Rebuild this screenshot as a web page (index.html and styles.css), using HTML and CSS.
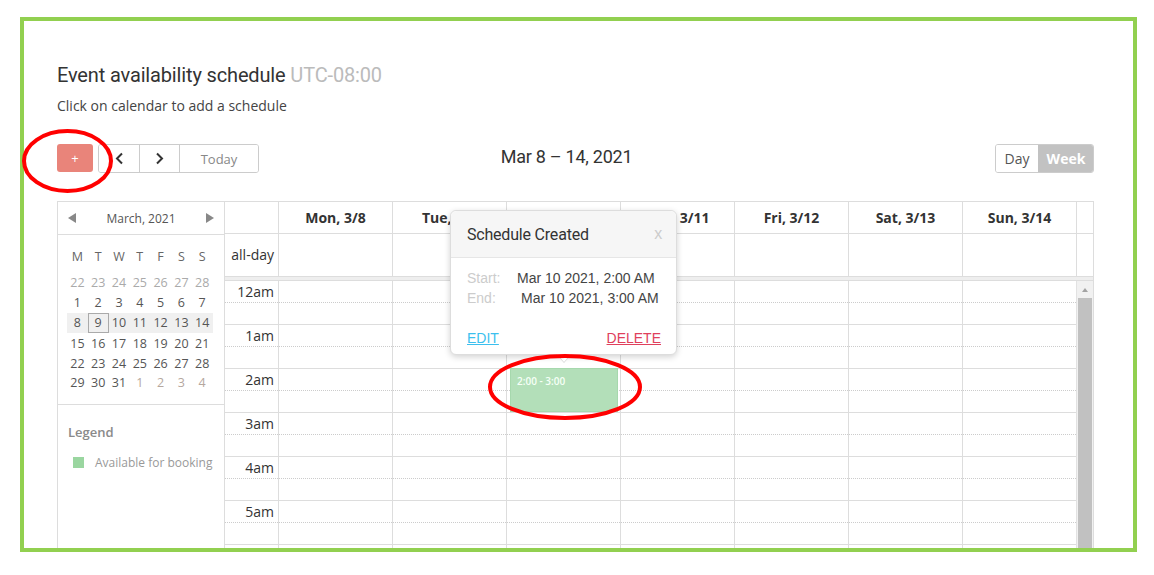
FILE: index.html
```html
<!DOCTYPE html>
<html lang="en">
<head>
  <meta charset="UTF-8" />
  <title>Event availability schedule</title>
  <link rel="stylesheet" href="styles.css">
</head>
<body>

  <div class="frame">
    <h2 class="title">Event availability schedule <span class="tz">UTC-08:00</span></h2>
    <p class="hint">Click on calendar to add a schedule</p>

    <div class="toolbar">
      <div class="tb-left">
        <button class="btn-add">+</button>
        <div class="btn-group">
          <button class="btn btn-nav">
            <svg width="9" height="13" viewBox="0 0 9 13"><path d="M7 1.5 2 6.5l5 5" fill="none" stroke="#333" stroke-width="2"/></svg>
          </button>
          <button class="btn btn-nav">
            <svg width="9" height="13" viewBox="0 0 9 13"><path d="M2 1.5l5 5-5 5" fill="none" stroke="#333" stroke-width="2"/></svg>
          </button>
          <button class="btn btn-today">Today</button>
        </div>
      </div>
      <h3 class="range">Mar 8 – 14, 2021</h3>
      <div class="tb-right">
        <div class="btn-group">
          <button class="btn btn-day">Day</button>
          <button class="btn btn-week active">Week</button>
        </div>
      </div>
    </div>

    <div class="cal">
      <aside class="side">
        <div class="mini-head">
          <svg width="8" height="10" viewBox="0 0 8 10"><path d="M8 0v10L0 5z" fill="#888"/></svg>
          <span>March, 2021</span>
          <svg width="8" height="10" viewBox="0 0 8 10"><path d="M0 0v10l8-5z" fill="#888"/></svg>
        </div>
        <table class="mini-grid">
          <tr class="dow"><th>M</th><th>T</th><th>W</th><th>T</th><th>F</th><th>S</th><th>S</th></tr>
          <tr><td class="prev">22</td><td class="prev">23</td><td class="prev">24</td><td class="prev">25</td><td class="prev">26</td><td class="prev">27</td><td class="prev">28</td></tr>
          <tr><td>1</td><td>2</td><td>3</td><td>4</td><td>5</td><td>6</td><td>7</td></tr>
          <tr class="cur-week"><td>8</td><td class="today">9</td><td>10</td><td>11</td><td>12</td><td>13</td><td>14</td></tr>
          <tr><td>15</td><td>16</td><td>17</td><td>18</td><td>19</td><td>20</td><td>21</td></tr>
          <tr><td>22</td><td>23</td><td>24</td><td>25</td><td>26</td><td>27</td><td>28</td></tr>
          <tr><td>29</td><td>30</td><td>31</td><td class="next">1</td><td class="next">2</td><td class="next">3</td><td class="next">4</td></tr>
        </table>
        <div class="legend">
          <h4>Legend</h4>
          <div class="legend-item"><span class="swatch"></span>Available for booking</div>
        </div>
      </aside>

      <div class="week">
        <div class="week-head">
          <div></div>
          <div>Mon, 3/8</div>
          <div>Tue, 3/9</div>
          <div>Wed, 3/10</div>
          <div>Thu, 3/11</div>
          <div>Fri, 3/12</div>
          <div>Sat, 3/13</div>
          <div>Sun, 3/14</div>
          <div></div>
        </div>
        <div class="allday">
          <div class="allday-label">all-day</div>
          <div></div><div></div><div></div><div></div><div></div><div></div><div></div>
          <div></div>
        </div>
        <div class="sep"></div>

        <div class="tg">
          <div class="tg-lines">
            <div class="hour"><div class="half"><span class="t">12am</span></div><div class="half"></div></div>
            <div class="hour"><div class="half"><span class="t">1am</span></div><div class="half"></div></div>
            <div class="hour"><div class="half"><span class="t">2am</span></div><div class="half"></div></div>
            <div class="hour"><div class="half"><span class="t">3am</span></div><div class="half"></div></div>
            <div class="hour"><div class="half"><span class="t">4am</span></div><div class="half"></div></div>
            <div class="hour"><div class="half"><span class="t">5am</span></div><div class="half"></div></div>
            <div class="hour"><div class="half"></div><div class="half"></div></div>
          </div>
          <div class="day-col c1"></div>
          <div class="day-col c2"></div>
          <div class="day-col c3">
            <div class="event">2:00 - 3:00</div>
          </div>
          <div class="day-col c4"></div>
          <div class="day-col c5"></div>
          <div class="day-col c6"></div>
          <div class="day-col c7"></div>
          <div class="vscroll">
            <div class="vscroll-up"></div>
            <div class="vscroll-thumb"></div>
          </div>
        </div>
      </div>

      <div class="popup">
        <div class="popup-head">
          <span>Schedule Created</span>
          <span class="popup-close">x</span>
        </div>
        <div class="popup-body">
          <div class="popup-row"><span class="lbl">Start:</span><span>Mar 10 2021, 2:00 AM</span></div>
          <div class="popup-row"><span class="lbl">End:</span><span class="end-val">Mar 10 2021, 3:00 AM</span></div>
          <div class="popup-actions">
            <a href="#" class="edit">EDIT</a>
            <a href="#" class="delete">DELETE</a>
          </div>
        </div>
      </div>
    </div>
  </div>

  <svg class="marks" width="1154" height="575" viewBox="0 0 1154 575">
    <ellipse cx="67.5" cy="161" rx="43.5" ry="30" fill="none" stroke="#f00" stroke-width="4"/>
    <ellipse cx="565" cy="387" rx="75" ry="31" fill="none" stroke="#f00" stroke-width="4"/>
  </svg>

</body>
</html>
```

FILE: styles.css
```css
* {
  box-sizing: border-box;
}
body {
  margin: 0;
  background: #fff;
  font-family: "Open Sans", sans-serif;
  color: #333;
}
.frame {
  width: 1117px;
  height: 535px;
  margin: 17px 0 0 20px;
  border: 4px solid #92d050;
  padding: 42px 39px 0 33px;
  overflow: hidden;
}
.title {
  margin: 0;
  font: 400 20px/24px Roboto, sans-serif;
  letter-spacing: -0.15px;
  color: #333;
}
.title .tz {
  color: #bbb;
}
.hint {
  margin: 9px 0 0;
  font-size: 14px;
  line-height: 20px;
  color: #444;
}

/* toolbar */
.toolbar {
  display: grid;
  grid-template-columns: 1fr auto 1fr;
  align-items: start;
  margin-top: 28px;
  height: 29px;
}
.tb-left {
  display: flex;
  gap: 5px;
}
.tb-right {
  display: flex;
  justify-content: flex-end;
}
.range {
  margin: 1px 18px 0 0;
  font: 400 18px/24px Roboto, sans-serif;
  letter-spacing: -0.25px;
  color: #333;
}
button {
  font-family: inherit;
  cursor: pointer;
}
.btn-add {
  width: 36px;
  height: 28px;
  padding: 0;
  border: none;
  border-radius: 3px;
  background: #e9847a;
  color: #fff;
  font-size: 13px;
}
.btn-group {
  display: flex;
  height: 29px;
  border: 1px solid #ccc;
  border-radius: 3px;
  overflow: hidden;
}
.btn {
  display: flex;
  align-items: center;
  justify-content: center;
  height: 27px;
  padding: 0;
  border: none;
  border-left: 1px solid #ccc;
  background: #fff;
  color: #888;
  font-size: 13px;
}
.btn:first-child {
  border-left: none;
}
.btn-nav {
  width: 40px;
}
.btn-today {
  width: 79px;
}
.btn-day {
  width: 42px;
  color: #555;
  font-size: 14px;
}
.btn-week {
  width: 55px;
  font-size: 14px;
}
.btn.active {
  background: #c2c2c2;
  border-left-color: #c2c2c2;
  color: #fff;
  font-weight: bold;
}

/* calendar */
.cal {
  position: relative;
  display: flex;
  margin-top: 28px;
  height: 420px;
}
.side {
  width: 167px;
  border-left: 1px solid #ddd;
  border-top: 1px solid #ddd;
}
.mini-head {
  display: flex;
  align-items: center;
  justify-content: space-between;
  height: 33px;
  padding: 0 10px;
  border-bottom: 1px solid #ddd;
  font-size: 12px;
  color: #555;
}
.mini-grid {
  width: 145.6px;
  margin: 11px 0 0 9px;
  border-collapse: collapse;
  table-layout: fixed;
  font-size: 12.5px;
  color: #555;
}
.mini-grid th,
.mini-grid td {
  width: 20.8px;
  height: 20.4px;
  padding: 0;
  text-align: center;
  font-weight: normal;
}
.mini-grid .dow th {
  height: 26px;
  padding-bottom: 6px;
  color: #666;
}
.mini-grid .prev {
  color: #aaa;
}
.mini-grid .next {
  color: #b5a79e;
}
.mini-grid .cur-week td {
  background: #f0f0f0;
}
.mini-grid .today {
  outline: 1px solid #aaa;
  outline-offset: -1px;
}
.mini-grid tr:last-child td {
  border-bottom: 13px solid #fff;
}
.mini-grid + .legend {
  border-top: 1px solid #ddd;
}
.legend {
  padding: 18px 10px;
}
.legend h4 {
  margin: 0;
  font-size: 13px;
  font-weight: 600;
  line-height: 18px;
  color: #8a8a8a;
}
.legend-item {
  display: flex;
  align-items: center;
  gap: 11px;
  margin: 13px 0 0 5px;
  font-size: 12px;
  line-height: 18px;
  color: #999;
}
.swatch {
  width: 11px;
  height: 11px;
  background: #9ad6a0;
}

/* week view */
.week {
  width: 870px;
  border: 1px solid #ddd;
  border-bottom: none;
}
.week-head,
.allday,
.tg {
  display: grid;
  grid-template-columns: 53px repeat(7, 114px) 17px;
}
.week-head {
  height: 32px;
  border-bottom: 1px solid #ddd;
}
.week-head > div {
  display: flex;
  align-items: center;
  justify-content: center;
  font-size: 14px;
  font-weight: bold;
  color: #333;
}
.week-head > div + div,
.allday > div + div {
  border-left: 1px solid #ddd;
}
.allday {
  height: 42px;
}
.allday-label {
  display: flex;
  align-items: center;
  justify-content: flex-end;
  padding: 0 4px 2px 0;
  font-size: 14px;
  color: #333;
}
.sep {
  height: 5px;
  background: #eee;
  border-top: 1px solid #ddd;
  border-bottom: 1px solid #ddd;
}
.tg-lines {
  grid-column: 1 / 9;
  grid-row: 1;
}
.hour .half {
  height: 22px;
  border-bottom: 1px dotted #ccc;
}
.hour .half + .half {
  border-bottom: 1px solid #ddd;
}
.t {
  display: block;
  width: 53px;
  padding-right: 4px;
  text-align: right;
  font-size: 14px;
  line-height: 22px;
  color: #333;
}
.day-col {
  grid-row: 1;
  border-left: 1px solid #ddd;
}
.c1 { grid-column: 2; }
.c2 { grid-column: 3; }
.c3 { grid-column: 4; }
.c4 { grid-column: 5; }
.c5 { grid-column: 6; }
.c6 { grid-column: 7; }
.c7 { grid-column: 8; }
.event {
  height: 44px;
  width: 108px;
  margin: 87px 0 0 3px;
  padding: 5px 6px;
  background: #b3dfb9;
  border: 1px solid #a6d8ad;
  color: #f6fff7;
  font-size: 10px;
  font-weight: 600;
  line-height: 14px;
}
.vscroll {
  grid-column: 9;
  grid-row: 1;
  padding: 0 1px;
  border-left: 1px solid #e2e2e2;
  background: #f1f1f1;
}
.vscroll-up {
  position: relative;
  height: 17px;
}
.vscroll-up::after {
  content: "";
  position: absolute;
  left: 4px;
  top: 7px;
  border: 3.5px solid transparent;
  border-top: none;
  border-bottom: 4px solid #a3a3a3;
}
.vscroll-thumb {
  height: 400px;
  background: #c1c1c1;
}

/* popup */
.popup {
  position: absolute;
  left: 393px;
  top: 9px;
  width: 227px;
  background: #fff;
  border: 1px solid #ddd;
  border-radius: 6px;
  box-shadow: 0 2px 6px rgba(0, 0, 0, 0.18);
}
.popup::before,
.popup::after {
  content: "";
  position: absolute;
  left: 106px;
  border: 7px solid transparent;
  border-bottom: none;
}
.popup::before {
  bottom: -9px;
  border-top: 8px solid #d6d6d6;
}
.popup::after {
  bottom: -8px;
  border-top: 8px solid #fff;
}
.popup-head {
  display: flex;
  justify-content: space-between;
  align-items: center;
  height: 47px;
  padding: 0 14px 0 16px;
  background: #f6f6f6;
  border-bottom: 1px solid #e6e6e6;
  border-radius: 6px 6px 0 0;
  font: 400 16px Roboto, sans-serif;
  letter-spacing: -0.2px;
  color: #333;
}
.popup-close {
  font: 16px "Liberation Sans", sans-serif;
  color: #ccc;
}
.popup-body {
  padding: 10px 15px 6px 16px;
  font: 14px/20px "Liberation Sans", Arial, sans-serif;
  color: #444;
}
.popup-row {
  display: flex;
}
.lbl {
  width: 50px;
  color: #ccc;
}
.end-val {
  padding-left: 4px;
}
.popup-actions {
  display: flex;
  justify-content: space-between;
  margin-top: 20px;
}
.edit {
  color: #3cbfee;
}
.delete {
  color: #e0405c;
}

.marks {
  position: absolute;
  left: 0;
  top: 0;
  pointer-events: none;
}
```
